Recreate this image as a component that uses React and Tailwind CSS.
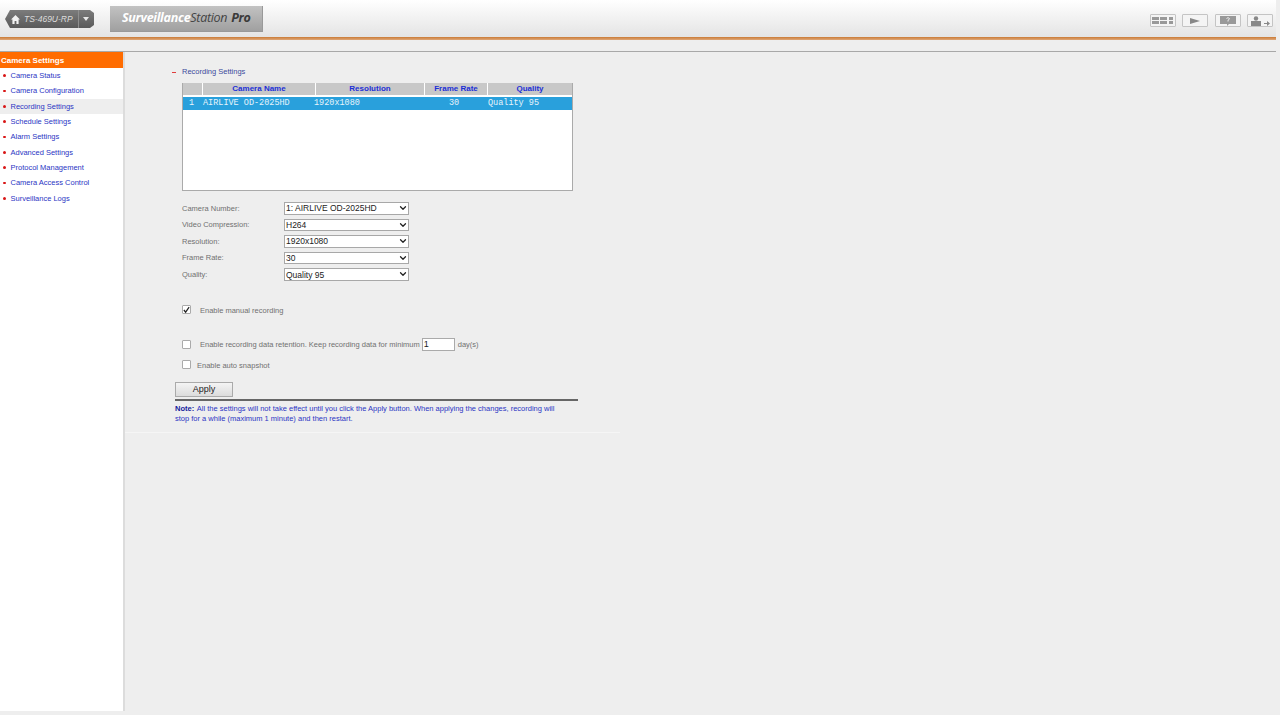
import { ChevronDown } from 'lucide-react'

const MENU = [
  'Camera Status',
  'Camera Configuration',
  'Recording Settings',
  'Schedule Settings',
  'Alarm Settings',
  'Advanced Settings',
  'Protocol Management',
  'Camera Access Control',
  'Surveillance Logs',
]

const FIELDS = [
  { label: 'Camera Number:', value: '1: AIRLIVE OD-2025HD' },
  { label: 'Video Compression:', value: 'H264' },
  { label: 'Resolution:', value: '1920x1080' },
  { label: 'Frame Rate:', value: '30' },
  { label: 'Quality:', value: 'Quality 95' },
]

function ToolButton({ children }) {
  return (
    <div className="flex h-[13px] w-[26px] items-center justify-center rounded-[1px] border border-[#c4c4c4] bg-[#f4f4f4]">
      {children}
    </div>
  )
}

function Header() {
  return (
    <header className="mr-[4px] flex h-[37px] items-center bg-gradient-to-b from-white to-[#e4e4e4] pl-[5px] pr-[3px]">
      {/* NAS name pill */}
      <div className="mt-[1px] flex h-[18px] w-[89px] items-center bg-gradient-to-b from-[#7c7c7c] to-[#5a5a5a] [clip-path:polygon(5px_0,85px_0,89px_3px,89px_15px,85px_18px,5px_18px,0_9px)]">
        <svg width="9" height="9" viewBox="0 0 9 9" className="ml-[6px]" fill="#f2f2f2"><path d="M4.5 0L9 4.5H7.6V9H5.4V6H3.6V9H1.4V4.5H0z" /></svg>
        <span className="ml-[4px] w-[54px] whitespace-nowrap text-[8.5px] italic text-[#dcdcdc]">TS-469U-RP</span>
        <span className="h-full w-px bg-[#8f8f8f]" />
        <svg width="6" height="4" viewBox="0 0 6 4" className="ml-[4px]"><path d="M0 0h6L3 4z" fill="#e8e8e8" /></svg>
      </div>

      {/* Product logo */}
      <div className="ml-[16px] flex h-[26px] w-[153px] items-center border-b border-r border-[#999] bg-gradient-to-b from-[#c2c2c2] to-[#a0a0a0] pl-[12px] font-['Open_Sans',sans-serif] text-[12.5px] italic tracking-[-0.3px]">
        <span className="font-bold text-white">Surveillance</span>
        <span className="text-[#444]">Station</span>
        <span className="ml-[4px] font-bold text-[#3a3a3a]">Pro</span>
      </div>

      <div className="ml-auto mt-[4px] flex items-center gap-[6.5px]">
        <ToolButton>
          <svg width="22" height="9" viewBox="0 0 22 9" fill="#999">
            <rect x="0" y="1" width="7" height="3" /><rect x="8" y="1" width="7" height="3" /><rect x="17" y="1" width="4" height="3" />
            <rect x="0" y="5" width="7" height="3" /><rect x="8" y="5" width="7" height="3" /><rect x="17" y="5" width="4" height="3" />
          </svg>
        </ToolButton>
        <ToolButton>
          <svg width="10" height="6" viewBox="0 0 10 6"><path d="M0 0l10 3L0 6z" fill="#888" /></svg>
        </ToolButton>
        <ToolButton>
          <svg width="16" height="10" viewBox="0 0 16 10">
            <path d="M0 0h16v8H9l-2 2V8H0z" fill="#999" />
            <path d="M6.5 2.5Q8 .8 9.5 2.5 9.5 3.6 8 4.2V5.5" stroke="#eee" fill="none" />
          </svg>
        </ToolButton>
        <ToolButton>
          <svg width="20" height="10" viewBox="0 0 20 10" fill="#888">
            <circle cx="6" cy="2.5" r="2.2" />
            <rect x="1" y="5" width="10" height="5" />
            <path d="M14 7h3V5l3 2.5L17 10V8h-3z" />
          </svg>
        </ToolButton>
      </div>
    </header>
  )
}

function Sidebar() {
  return (
    <aside className="h-[659px] w-[125px] shrink-0 border-r-2 border-[#dcdcdc] bg-white">
      <div className="h-[16px] bg-[#ff6c00] pl-[1px] text-[8px] font-bold leading-[17px] text-white">
        Camera Settings
      </div>
      <ul>
        {MENU.map((item) => (
          <li
            key={item}
            className={`flex h-[15.35px] items-center pl-[3px] text-[#2b35c4] ${item === 'Recording Settings' ? 'bg-[#eeeeee]' : ''}`}
          >
            <span className="mr-[5px] h-[2.5px] w-[2.5px] rounded-full bg-[#d81515]" />
            {item}
          </li>
        ))}
      </ul>
    </aside>
  )
}

function CameraTable() {
  const headCell = 'flex h-[12px] items-center justify-center bg-[#c8c8c8] text-[8px] font-bold text-[#1c2fd6]'
  return (
    <div className="ml-[57px] mt-[6px] h-[108px] w-[391px] border-x border-b border-[#aaa] bg-white">
      <div className="grid grid-cols-[19px_112px_108px_62px_1fr] gap-x-px">
        <div className={headCell} />
        <div className={headCell}>Camera Name</div>
        <div className={headCell}>Resolution</div>
        <div className={headCell}>Frame Rate</div>
        <div className={headCell}>Quality</div>
      </div>
      <div className="mt-[2px] grid h-[13px] grid-cols-[20px_111px_108px_66px_1fr] items-center whitespace-nowrap bg-[#29a0dc] font-['Liberation_Mono',monospace] text-[8.5px] text-[#e8f4fb]">
        <span className="pl-[6px]">1</span>
        <span>AIRLIVE OD-2025HD</span>
        <span>1920x1080</span>
        <span className="pl-[27px]">30</span>
        <span>Quality 95</span>
      </div>
    </div>
  )
}

function Field({ label, value }) {
  return (
    <div className="flex h-[16.6px] items-center">
      <label className="w-[102px] text-[#707070]">{label}</label>
      <div className="relative">
        <select
          defaultValue={value}
          className="block h-[12.5px] w-[125px] appearance-none border border-[#a8a8a8] bg-white pl-[1px] text-[8.5px] leading-[10px] text-[#222]"
        >
          <option>{value}</option>
        </select>
        <ChevronDown size={10} strokeWidth={3} className="pointer-events-none absolute right-[1px] top-[1px] text-[#222]" />
      </div>
    </div>
  )
}

function Box({ checked }) {
  return (
    <span className="flex h-[9px] w-[9px] shrink-0 items-center justify-center rounded-[1px] border border-[#aaa] bg-white">
      {checked && (
        <svg width="8" height="8" viewBox="0 0 8 8"><path d="M1 4l2 2.5L7 .8" stroke="#222" strokeWidth="1.4" fill="none" /></svg>
      )}
    </span>
  )
}

function Content() {
  return (
    <main className="w-[495px]">
      <div className="border-b border-[#f5f5f5] pb-[8px] pt-[15px]">
        <div className="ml-[47px] flex h-[10px] items-center text-[#3c4a9c]">
          <span className="mr-[6px] h-px w-[4px] bg-[#e03c3c]" />
          Recording Settings
        </div>

        <CameraTable />

        <div className="ml-[57px] mt-[9px]">
          {FIELDS.map((f) => (
            <Field key={f.label} {...f} />
          ))}
        </div>

        <div className="ml-[57px] mt-[22px] flex h-[10px] items-center text-[#707070]">
          <Box checked />
          <span className="ml-[9px] mt-[1px]">Enable manual recording</span>
        </div>

        <div className="ml-[57px] mt-[23px] flex h-[13px] items-center text-[#707070]">
          <Box />
          <span className="ml-[9px]">Enable recording data retention. Keep recording data for minimum</span>
          <input
            readOnly
            value="1"
            className="ml-[2px] h-[13px] w-[33px] border border-[#aaa] bg-white pl-[1px] text-[9px] text-[#222]"
          />
          <span className="ml-[3px]">day(s)</span>
        </div>

        <div className="ml-[57px] mt-[9px] flex h-[10px] items-center text-[#707070]">
          <Box />
          <span className="ml-[6px] mt-[2px]">Enable auto snapshot</span>
        </div>

        <div className="ml-[50px] mt-[12px] w-[403px]">
          <button className="block h-[15px] w-[58px] border border-[#aaa] bg-gradient-to-b from-[#f4f4f4] to-[#dcdcdc] text-[9px] leading-[13px] text-[#222]">
            Apply
          </button>
          <div className="mt-[2px] h-[2px] bg-[#666]" />
          <p className="mt-[3px] leading-[10px] text-[#2b35c4]">
            <b className="mr-px text-[#14209c]">Note:</b> All the settings will not take effect until you click the Apply button. When applying the changes, recording will
            <br />
            stop for a while (maximum 1 minute) and then restart.
          </p>
        </div>
      </div>
    </main>
  )
}

export default function App() {
  return (
    <div className="h-[715px] w-[1280px] overflow-hidden bg-[#eeeeee] font-['Liberation_Sans',sans-serif] text-[7.5px]">
      <Header />
      <div className="mr-[4px] h-[3px] bg-gradient-to-b from-[#c97a34] to-[#e0a878]" />
      <div className="mr-[4px] mt-[11px] h-[1px] bg-[#a8a8a8]" />
      <div className="flex">
        <Sidebar />
        <Content />
      </div>
    </div>
  )
}
